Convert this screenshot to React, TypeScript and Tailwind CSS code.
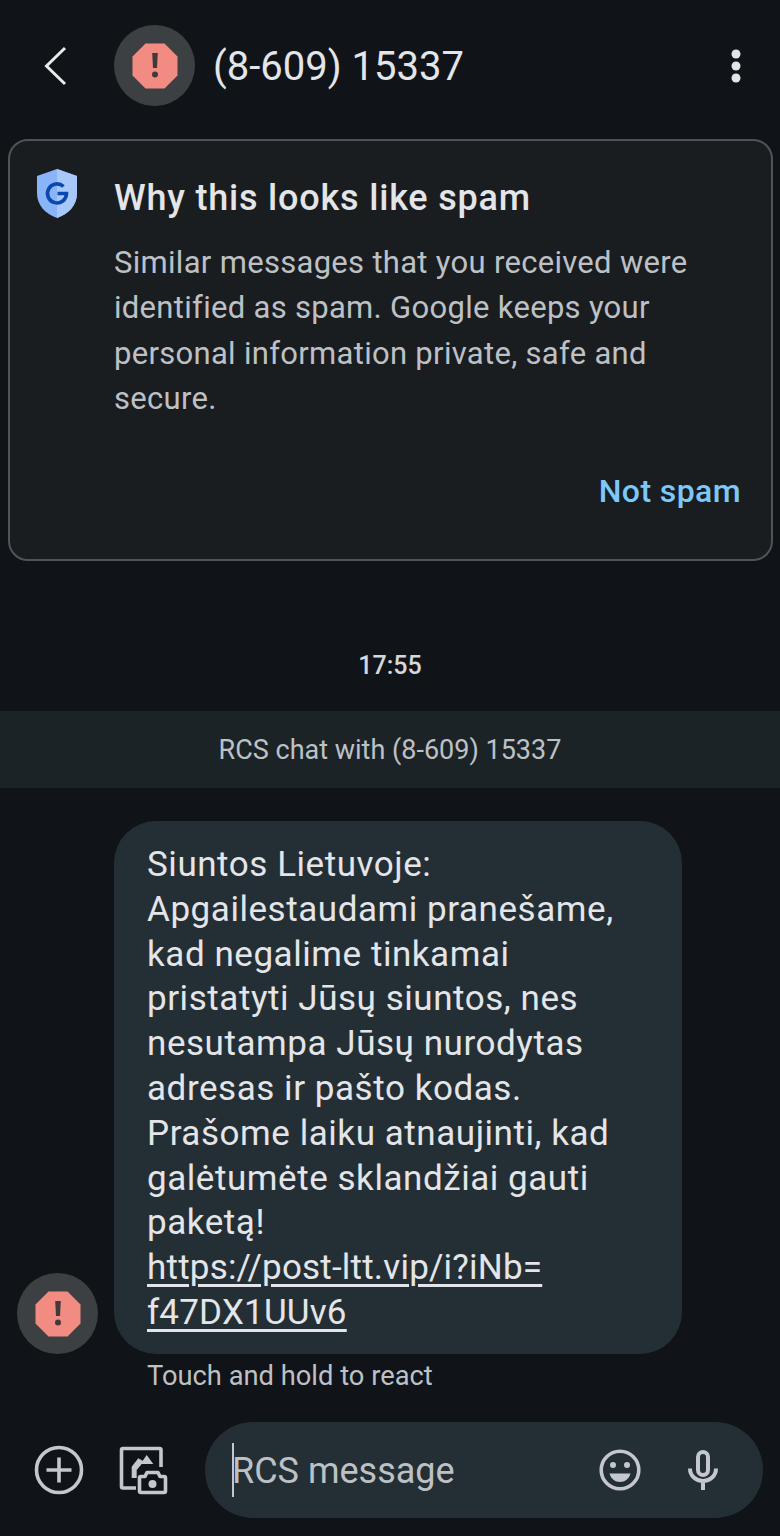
function SpamBadge() {
  return (
    <div className="w-[81px] h-[81px] shrink-0 rounded-full bg-[#3d4043] flex items-center justify-center">
      <svg viewBox="0 0 46 46" className="w-[46px] h-[46px]">
        <polygon points="13.5,0.5 32.5,0.5 45.5,13.5 45.5,32.5 32.5,45.5 13.5,45.5 0.5,32.5 0.5,13.5" fill="#f28b82" />
        <path d="M20.200 10 H25.800 L25 25 H21 Z" fill="#3f3a3b" />
        <circle cx="23" cy="31.500" r="3" fill="#3f3a3b" />
      </svg>
    </div>
  )
}

function Header() {
  return (
    <header className="h-[131px] flex items-center pl-[44px] pr-[37px]">
      <svg viewBox="0 0 24 40" className="w-[24px] h-[40px]" fill="none">
        <path d="M21 2 L2.5 20 L21 38" stroke="#e8eaed" strokeWidth="3" />
      </svg>
      <div className="ml-[46px]">
        <SpamBadge />
      </div>
      <h1 className="ml-[18px] pt-[2px] text-[40px] leading-none text-[#e3e5e8]">(8-609) 15337</h1>
      <svg viewBox="0 0 14 34" className="ml-auto w-[14px] h-[34px]" fill="#e3e5e8">
        <circle cx="7" cy="5" r="4.5" />
        <circle cx="7" cy="17" r="4.5" />
        <circle cx="7" cy="29" r="4.5" />
      </svg>
    </header>
  )
}

function SpamCard() {
  return (
    <section className="ml-[8px] mr-[7px] mt-[8px] h-[422px] rounded-[20px] border-2 border-[#505458] bg-[#1a1d20] flex">
      <div className="w-[104px] shrink-0 pt-[28px] pl-[27px]">
        <svg viewBox="0 0 40 50" className="w-[40px] h-[50px]">
          <path d="M20 0 L40 7 V24 C40 37 31 45 20 49 C9 45 0 37 0 24 V7 Z" fill="#8ab4f8" />
          <path d="M20 0 L40 7 V24 C40 37 31 45 20 49 Z" fill="#a8c7fa" />
          <path d="M26.500 17.500 A9.500 9.500 0 1 0 29.500 24.500 H20.500" fill="none" stroke="#0b47b0" strokeWidth="3.600" />
        </svg>
      </div>
      <div className="flex-1 pr-[30px] flex flex-col">
        <h2 className="mt-[34px] text-[36px] leading-[46px] font-medium tracking-[0.8px] text-[#e3e5e8]">Why this looks like spam</h2>
        <p className="mt-[19px] text-[31px] leading-[45.4px] tracking-[0.3px] text-[#bdc1c6]">
          Similar messages that you received were identified as spam. Google keeps your personal information private, safe and secure.
        </p>
        <button className="mt-auto mb-[48px] self-end text-[32px] leading-[40px] font-medium tracking-[0.4px] text-[#7cc8f8]">Not spam</button>
      </div>
    </section>
  )
}

function Message() {
  return (
    <div className="flex items-end pl-[17px] mt-[33px]">
      <SpamBadge />
      <div className="ml-[16px] w-[568px] h-[533px] rounded-[42px] bg-[#242f35] pl-[33px] pr-[20px] pt-[22px] text-[35px] leading-[44.8px] tracking-[0.55px] text-[#e3e5e8]">
        <p>
          Siuntos Lietuvoje:<br />
          Apgailestaudami pranešame,<br />
          kad negalime tinkamai<br />
          pristatyti Jūsų siuntos, nes<br />
          nesutampa Jūsų nurodytas<br />
          adresas ir pašto kodas.<br />
          Prašome laiku atnaujinti, kad<br />
          galėtumėte sklandžiai gauti<br />
          paketą!<br />
          <span className="underline decoration-[3px] underline-offset-[5px] tracking-[0.2px]">https://post-ltt.vip/i?iNb=<br />f47DX1UUv6</span>
        </p>
      </div>
    </div>
  )
}

function Composer() {
  return (
    <footer className="mt-auto h-[114px] pb-[18px] flex items-center pl-[34px] pr-[17px]">
      <svg viewBox="0 0 50 50" className="w-[50px] h-[50px]" fill="none" stroke="#c4c7cb" strokeWidth="3.6">
        <circle cx="25" cy="25" r="22.5" />
        <path d="M25 12.5v25M12.5 25h25" />
      </svg>
      <svg viewBox="0 0 50 50" className="ml-[35px] w-[50px] h-[50px]" fill="none" stroke="#c4c7cb" strokeWidth="3.6" strokeLinejoin="round">
        <path d="M17 43H4a1.500 1.500 0 0 1-1.500-1.500V5A1.500 1.500 0 0 1 4 3.500h36.500A1.500 1.500 0 0 1 42 5V22" />
        <path d="M12.700 33 V21.700 L19.300 13.300 L23.700 15.700 L27.700 10 L34.300 19 H22.700 L17.700 25 V33 Z" fill="#c4c7cb" stroke="none" />
        <path d="M20.500 33a1.500 1.500 0 0 1 1.500-1.500h4l2-4h11l2 4h4a1.500 1.500 0 0 1 1.500 1.500v13a1.500 1.500 0 0 1-1.500 1.500H22a1.500 1.500 0 0 1-1.500-1.500Z" fill="#101418" />
        <circle cx="33.500" cy="39" r="4" fill="#c4c7cb" stroke="none" />
      </svg>
      <div className="ml-[36px] flex-1 h-[96px] rounded-[48px] bg-[#242f35] flex items-center pl-[27px] pr-[45px]">
        <span className="w-[2px] h-[54px] bg-[#c4c7cb]" />
        <span className="-ml-[2px] pt-[1px] text-[36px] leading-none text-[#bdc1c6]">RCS message</span>
        <svg viewBox="0 0 42 42" className="ml-auto w-[42px] h-[42px]" fill="none" stroke="#c4c7cb" strokeWidth="3.6">
          <circle cx="21" cy="21" r="18.800" />
          <circle cx="14" cy="16" r="3" fill="#c4c7cb" stroke="none" />
          <circle cx="28" cy="16" r="3" fill="#c4c7cb" stroke="none" />
          <path d="M10.500 24.500 H31.500 C30 30 26 33 21 33 C16 33 12 30 10.500 24.500 Z" fill="#c4c7cb" stroke="none" />
        </svg>
        <svg viewBox="0 0 30 40" className="ml-[47px] w-[30px] h-[40px]" fill="none" stroke="#c4c7cb" strokeWidth="4">
          <rect x="10" y="2" width="10" height="23" rx="5" />
          <path d="M2 18.500 C2 26 8 31 15 31 C22 31 28 26 28 18.500 M15 31 V40" />
        </svg>
      </div>
    </footer>
  )
}

export default function App() {
  return (
    <div className="w-[780px] h-[1536px] bg-[#101418] flex flex-col overflow-hidden font-['Roboto',sans-serif]">
      <Header />
      <SpamCard />
      <div className="mt-[88px] text-center text-[25px] leading-[34px] font-medium text-[#d5d7da]">17:55</div>
      <div className="mt-[28px] h-[77px] pt-[1px] bg-[#1c2327] flex items-center justify-center text-[27px] text-[#bdc1c6]">
        RCS chat with (8-609) 15337
      </div>
      <Message />
      <div className="ml-[147px] mt-[4px] text-[27.300px] leading-[36px] text-[#bdc1c6]">Touch and hold to react</div>
      <Composer />
    </div>
  )
}
